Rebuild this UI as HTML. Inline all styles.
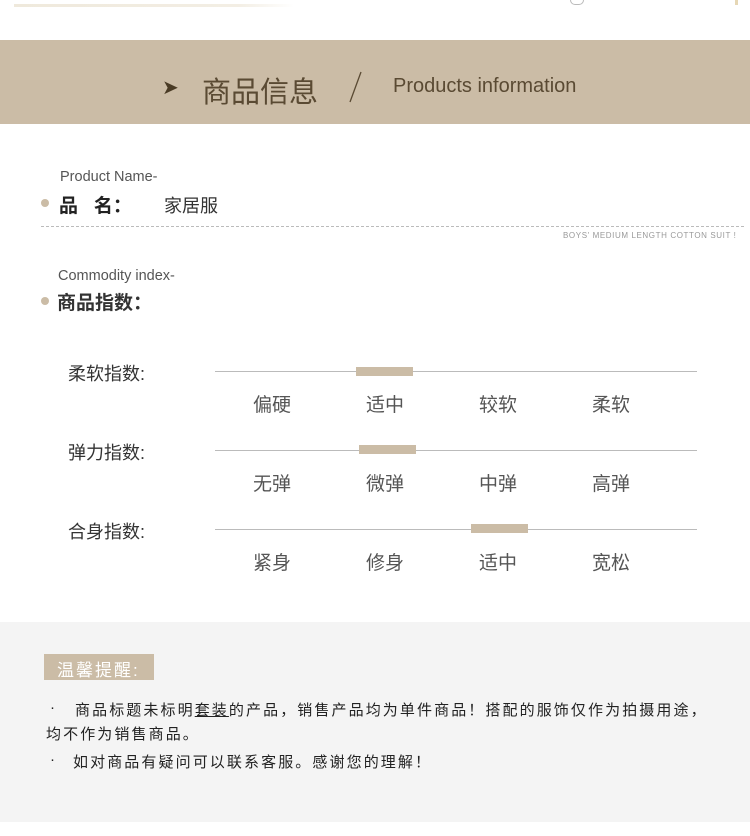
<!DOCTYPE html>
<html><head><meta charset="utf-8"><style>
body{margin:0;width:750px;height:836px;position:relative;background:#fff;font-family:"Liberation Sans","Noto Sans CJK SC",sans-serif;overflow:hidden}
.a{position:absolute;white-space:nowrap}
.line{position:absolute;left:215px;width:482px;height:1px;background:#bbb}
.mk{position:absolute;width:57px;height:9px;background:#cbbca6}
.opt{position:absolute;width:80px;text-align:center;font-size:19px;color:#555;margin-left:-40px}
.lab{position:absolute;left:68px;font-size:18px;color:#333}
.dot{position:absolute;width:8px;height:8px;border-radius:50%;background:#cbbca6}
</style></head><body>
<div class="a" style="left:14px;top:4px;width:280px;height:3px;background:linear-gradient(90deg,#efe9dc,#f3eee4 80%,#fff)"></div>
<div class="a" style="left:570px;top:0;width:12px;height:4px;border:1px solid #bbb;border-top:none;border-radius:0 0 6px 6px"></div>
<div class="a" style="left:735px;top:0;width:3px;height:5px;background:#e6d7b5"></div>
<div class="a" style="left:0;top:40px;width:750px;height:84px;background:#cbbca6"></div>
<div class="a" style="left:162px;top:75px;font-size:20px;color:#4a3b25">➤</div>
<div class="a" style="left:202px;top:69px;font-size:29px;color:#5a4a33">商品信息</div>
<svg class="a" style="left:345px;top:70px" width="20" height="34"><line x1="16" y1="2" x2="5" y2="32" stroke="#5a4a33" stroke-width="1.3"/></svg>
<div class="a" style="left:393px;top:75px;font-size:20px;color:#5a4a33">Products information</div>

<div class="a" style="left:60px;top:169px;font-size:14.5px;color:#555">Product Name-</div>
<div class="dot" style="left:41px;top:199px"></div>
<div class="a" style="left:59px;top:191px;font-size:19px;font-weight:bold;color:#222">品&nbsp;&nbsp;&nbsp;名：</div>
<div class="a" style="left:164px;top:192px;font-size:18px;color:#333">家居服</div>
<div class="a" style="left:41px;top:226px;width:703px;border-top:1px dashed #bbb"></div>
<div class="a" style="left:563px;top:231px;font-size:8px;color:#999;letter-spacing:.6px">BOYS' MEDIUM LENGTH COTTON SUIT !</div>

<div class="a" style="left:58px;top:268px;font-size:14.5px;color:#555">Commodity index-</div>
<div class="dot" style="left:41px;top:297px"></div>
<div class="a" style="left:57px;top:288px;font-size:19px;font-weight:bold;color:#333">商品指数：</div>

<div class="lab" style="top:360px">柔软指数:</div>
<div class="line" style="top:371px"></div><div class="mk" style="left:356px;top:367px"></div>
<div class="opt" style="left:272px;top:390px">偏硬</div><div class="opt" style="left:385px;top:390px">适中</div><div class="opt" style="left:498px;top:390px">较软</div><div class="opt" style="left:611px;top:390px">柔软</div>

<div class="lab" style="top:439px">弹力指数:</div>
<div class="line" style="top:450px"></div><div class="mk" style="left:359px;top:445px"></div>
<div class="opt" style="left:272px;top:469px">无弹</div><div class="opt" style="left:385px;top:469px">微弹</div><div class="opt" style="left:498px;top:469px">中弹</div><div class="opt" style="left:611px;top:469px">高弹</div>

<div class="lab" style="top:518px">合身指数:</div>
<div class="line" style="top:529px"></div><div class="mk" style="left:471px;top:524px"></div>
<div class="opt" style="left:272px;top:548px">紧身</div><div class="opt" style="left:385px;top:548px">修身</div><div class="opt" style="left:498px;top:548px">适中</div><div class="opt" style="left:611px;top:548px">宽松</div>

<div class="a" style="left:0;top:622px;width:750px;height:200px;background:#f4f4f4"></div>
<div class="a" style="left:44px;top:654px;width:110px;height:26px;background:#cbbca6"></div>
<div class="a" style="left:57px;top:656px;font-size:17px;color:#fff;letter-spacing:2px">温馨提醒:</div>
<div class="a" style="left:50px;top:699px;font-size:15px;color:#222">·</div>
<div class="a" style="left:75px;top:699px;font-size:15px;color:#222;letter-spacing:2.1px">商品标题未标明<u>套装</u>的产品，销售产品均为单件商品！搭配的服饰仅作为拍摄用途，</div>
<div class="a" style="left:46px;top:723px;font-size:15px;color:#222;letter-spacing:2.1px">均不作为销售商品。</div>
<div class="a" style="left:50px;top:751px;font-size:15px;color:#222">·</div>
<div class="a" style="left:73px;top:751px;font-size:15px;color:#222;letter-spacing:2.1px">如对商品有疑问可以联系客服。感谢您的理解！</div>
</body></html>
